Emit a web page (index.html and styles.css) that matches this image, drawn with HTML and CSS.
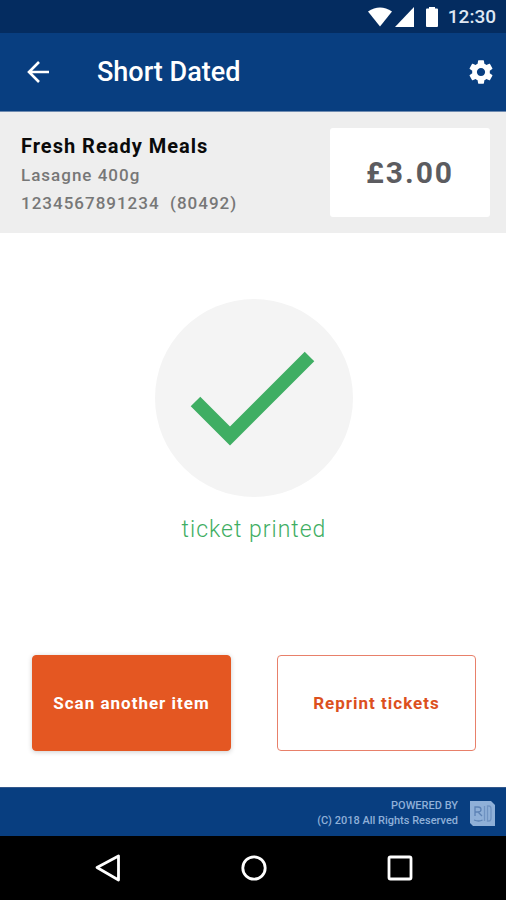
FILE: index.html
```html
<!DOCTYPE html>
<html lang="en">
<head>
<meta charset="utf-8">
<meta name="viewport" content="width=device-width, initial-scale=1">
<title>Short Dated</title>
<link rel="stylesheet" href="styles.css">
</head>
<body>
<div class="screen">
  <div class="status-bar">
    <svg class="status-icons" viewBox="0 0 72 20" width="72" height="20" aria-hidden="true">
      <path d="M12 19.500L0 4.500Q12-3.500 24 4.500Z"/>
      <path d="M46 0V20H27Z"/>
      <path d="M58 2.500Q58 1.500 59 1.500H61V0H67V1.500H69Q70 1.500 70 2.500V19Q70 20 69 20H59Q58 20 58 19Z"/>
    </svg>
    <span class="clock">12:30</span>
  </div>

  <header class="app-bar">
    <button class="icon-button" type="button" aria-label="Back">
      <svg viewBox="0 0 22 22" width="22" height="22">
        <path class="arrow" d="M22 11H2M12 1L2 11L12 21"/>
      </svg>
    </button>
    <h1 class="title">Short Dated</h1>
    <button class="icon-button" type="button" aria-label="Settings">
      <svg viewBox="1.800 1.800 20.400 20.400" width="24" height="24">
        <path fill="currentColor" d="M19.430 12.980c.04-.32.07-.64.07-.98s-.03-.66-.07-.98l2.110-1.650c.19-.15.24-.42.12-.64l-2-3.460c-.12-.22-.39-.3-.61-.22l-2.490 1c-.52-.4-1.080-.73-1.690-.98l-.38-2.650C14.460 2.180 14.250 2 14 2h-4c-.25 0-.46.18-.49.42l-.38 2.650c-.61.25-1.170.59-1.690.98l-2.490-1c-.23-.09-.49 0-.61.22l-2 3.460c-.13.22-.07.49.12.64l2.110 1.650c-.04.32-.07.65-.07.98s.03.66.07.98l-2.110 1.650c-.19.15-.24.42-.12.64l2 3.460c.12.22.39.3.61.22l2.490-1c.52.4 1.080.73 1.690.98l.38 2.650c.03.24.24.42.49.42h4c.25 0 .46-.18.49-.42l.38-2.650c.61-.25 1.170-.59 1.690-.98l2.490 1c.23.09.49 0 .61-.22l2-3.460c.12-.22.07-.49-.12-.64l-2.110-1.650zM12 15.500c-1.930 0-3.500-1.570-3.500-3.500s1.570-3.500 3.500-3.500 3.500 1.570 3.500 3.500-1.570 3.500-3.500 3.500z"/>
      </svg>
    </button>
  </header>

  <section class="product">
    <div class="product-info">
      <h2 class="product-name">Fresh Ready Meals</h2>
      <p class="product-line">Lasagne 400g</p>
      <p class="product-line">1234567891234&nbsp; (80492)</p>
    </div>
    <div class="price">£3.00</div>
  </section>

  <main class="content">
    <div class="result">
      <svg class="tick" viewBox="0 0 198 198" width="198" height="198" aria-hidden="true">
        <circle cx="99" cy="99" r="99" fill="#f4f4f4"/>
        <path d="M40.500 102.500L75 137L154.500 57.500" fill="none" stroke="#3fae63" stroke-width="13.500"/>
      </svg>
      <p class="result-text">ticket printed</p>
    </div>
    <div class="actions">
      <button class="action action-primary" type="button">Scan another item</button>
      <button class="action action-outline" type="button">Reprint tickets</button>
    </div>
  </main>

  <footer class="footer">
    <div class="credit">
      <p>POWERED BY</p>
      <p>(C) 2018 All Rights Reserved</p>
    </div>
    <svg class="logo" viewBox="0 0 25 25" width="25" height="25" aria-hidden="true">
      <path d="M0 0H21L25 4V25H3L0 22Z" fill="#8fb0d8"/>
      <path d="M5 15V6H8Q11 6 11 8.500Q11 11 8 11H5M8 11L12 15M4 19Q9 21 12.500 19" fill="none" stroke="#5c82b5" stroke-width="1.300"/>
      <path d="M14.500 5V20M17.500 5H19Q21 5 21 8V17Q21 20 19 20H17.500Z" fill="none" stroke="#6f93c2" stroke-width="1.300"/>
    </svg>
  </footer>

  <nav class="system-nav" aria-label="System">
    <button class="icon-button" type="button" aria-label="Back">
      <svg viewBox="0 0 26 28" width="26" height="28"><path class="nav-shape" d="M2 13.500L23.500 2V26Z"/></svg>
    </button>
    <button class="icon-button" type="button" aria-label="Home">
      <svg viewBox="0 0 26 28" width="26" height="28"><circle class="nav-shape" cx="13" cy="14" r="11.200"/></svg>
    </button>
    <button class="icon-button" type="button" aria-label="Recent apps">
      <svg viewBox="0 0 26 28" width="26" height="28"><rect class="nav-shape" x="2" y="3" width="22" height="22" rx="1.500"/></svg>
    </button>
  </nav>
</div>
</body>
</html>
```
FILE: styles.css
```css
* {
  box-sizing: border-box;
}

body,
h1,
h2,
p {
  margin: 0;
}

body {
  font-family: Roboto, "Liberation Sans", sans-serif;
  background: #fff;
}

button {
  font-family: inherit;
  cursor: pointer;
}

svg {
  display: block;
}

.screen {
  min-height: 100vh;
  display: flex;
  flex-direction: column;
}

.status-bar {
  display: flex;
  align-items: center;
  justify-content: flex-end;
  gap: 8px;
  padding: 7px 10px 6px;
  background: #042c60;
  color: #dfe7f2;
}

.status-icons {
  fill: #fff;
}

.clock {
  font-size: 19px;
  line-height: 20px;
  font-weight: 500;
}

.app-bar {
  display: flex;
  align-items: center;
  padding: 24px 13px 24px 27px;
  background: #083e80;
  color: #fff;
  border-bottom: 1px solid #6f8bb0;
}

.icon-button {
  padding: 0;
  border: 0;
  background: none;
  color: inherit;
}

.arrow {
  fill: none;
  stroke: currentColor;
  stroke-width: 2.6;
}

.title {
  flex: 1;
  margin-left: 48px;
  font-size: 27px;
  line-height: 30px;
  font-weight: 500;
}

.product {
  display: flex;
  align-items: stretch;
  justify-content: space-between;
  padding: 16px 16px 16px 21px;
  background: #eee;
}

.product-info {
  padding-top: 3px;
}

.product-name {
  font-size: 20px;
  line-height: 30px;
  font-weight: 700;
  letter-spacing: 1px;
  color: #0a0a0a;
}

.product-line {
  font-size: 17px;
  line-height: 28px;
  font-weight: 500;
  letter-spacing: 1px;
  color: #777;
}

.price {
  width: 160px;
  display: flex;
  align-items: center;
  justify-content: center;
  border-radius: 3px;
  background: #fff;
  font-size: 30px;
  font-weight: 700;
  letter-spacing: 2px;
  color: #5c5c60;
}

.content {
  flex: 1;
  display: flex;
  flex-direction: column;
  justify-content: space-between;
  padding: 66px 30px 36px 32px;
}

.result {
  display: flex;
  flex-direction: column;
  align-items: center;
  gap: 18px;
}

.result-text {
  font-size: 23px;
  line-height: 30px;
  font-weight: 300;
  letter-spacing: 1px;
  color: #3fae63;
}

.actions {
  display: grid;
  grid-template-columns: 1fr 1fr;
  gap: 46px;
}

.action {
  height: 96px;
  padding: 0;
  border: 1px solid #e45722;
  border-radius: 4px;
  font-size: 17px;
  font-weight: 700;
  letter-spacing: 1px;
}

.action-primary {
  background: #e45722;
  color: #fff;
  box-shadow: 0 1px 5px rgba(0, 0, 0, 0.2);
}

.action-outline {
  background: #fff;
  border-color: #e8806a;
  color: #dc501e;
}

.footer {
  display: flex;
  align-items: center;
  justify-content: flex-end;
  gap: 12px;
  padding: 10px 11px 8px;
  background: #083e80;
  border-top: 1px solid #33588c;
  color: #8fb0d8;
}

.credit {
  text-align: right;
  font-size: 11px;
  line-height: 15px;
  font-weight: 500;
}

.system-nav {
  display: flex;
  align-items: center;
  justify-content: space-between;
  padding: 18px 93px 18px 95px;
  background: #000;
  color: #fff;
}

.nav-shape {
  fill: none;
  stroke: currentColor;
  stroke-width: 2.8;
  stroke-linejoin: round;
}
```
